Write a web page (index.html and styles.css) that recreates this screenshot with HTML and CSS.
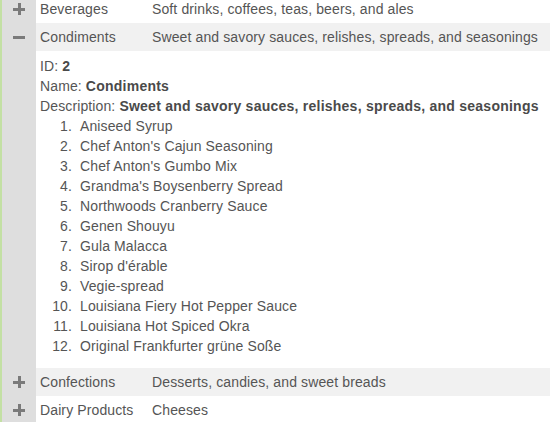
FILE: index.html
```html
<!DOCTYPE html>
<html>
<head>
<meta charset="utf-8">
<link rel="stylesheet" href="styles.css">
</head>
<body>
<div class="grid">
  <div class="row">
    <div class="hcell"><span class="icon plus"></span></div>
    <div class="cell c1">Beverages</div>
    <div class="cell c2">Soft drinks, coffees, teas, beers, and ales</div>
  </div>
  <div class="row alt">
    <div class="hcell"><span class="icon minus"></span></div>
    <div class="cell c1">Condiments</div>
    <div class="cell c2">Sweet and savory sauces, relishes, spreads, and seasonings</div>
  </div>
  <div class="row detail">
    <div class="hcell"></div>
    <div class="dcell">
      <div class="line">ID: <b>2</b></div>
      <div class="line">Name: <b>Condiments</b></div>
      <div class="line">Description: <b>Sweet and savory sauces, relishes, spreads, and seasonings</b></div>
      <ol class="products">
        <li>Aniseed Syrup</li>
        <li>Chef Anton's Cajun Seasoning</li>
        <li>Chef Anton's Gumbo Mix</li>
        <li>Grandma's Boysenberry Spread</li>
        <li>Northwoods Cranberry Sauce</li>
        <li>Genen Shouyu</li>
        <li>Gula Malacca</li>
        <li>Sirop d'érable</li>
        <li>Vegie-spread</li>
        <li>Louisiana Fiery Hot Pepper Sauce</li>
        <li>Louisiana Hot Spiced Okra</li>
        <li>Original Frankfurter grüne Soße</li>
      </ol>
    </div>
  </div>
  <div class="row alt">
    <div class="hcell"><span class="icon plus"></span></div>
    <div class="cell c1">Confections</div>
    <div class="cell c2">Desserts, candies, and sweet breads</div>
  </div>
  <div class="row">
    <div class="hcell"><span class="icon plus"></span></div>
    <div class="cell c1">Dairy Products</div>
    <div class="cell c2">Cheeses</div>
  </div>
</div>
</body>
</html>
```
FILE: styles.css
```css
html, body {
  margin: 0;
  padding: 0;
  background: #ffffff;
  overflow: hidden;
}
body {
  font-family: "Liberation Sans", Arial, sans-serif;
  font-size: 14px;
  color: #555555;
  letter-spacing: 0.12px;
}
.grid {
  margin-top: -5px;
  border-left: 2px solid #c3e0a4;
}
.row {
  display: flex;
  min-height: 28px;
}
.row.alt .cell {
  background: #f1f1f1;
}
.hcell {
  width: 34px;
  flex: none;
  background: #dedede;
  display: flex;
  align-items: center;
  justify-content: center;
}
.cell {
  display: flex;
  align-items: center;
  padding: 0 4px;
  line-height: 28px;
  white-space: nowrap;
}
.c1 {
  width: 104px;
  flex: none;
}
.c2 {
  flex: 1;
}
.icon {
  position: relative;
  width: 12px;
  height: 12px;
  display: block;
}
.icon::before,
.icon::after {
  content: "";
  position: absolute;
  background: #7a7a7a;
}
.icon::before {
  left: 0;
  top: 5px;
  width: 12px;
  height: 3px;
}
.plus::after {
  left: 5px;
  top: 0;
  width: 3px;
  height: 12px;
}
.minus::after {
  display: none;
}
.dcell {
  flex: 1;
  padding: 5px 4px 12px;
  line-height: 20px;
  white-space: nowrap;
}
.dcell b {
  color: #4a4a4a;
  letter-spacing: 0.24px;
}
.products {
  margin: 0;
  padding-left: 40px;
}
.products li::marker {
  content: counter(list-item) ".\00a0\00a0";
}
```
